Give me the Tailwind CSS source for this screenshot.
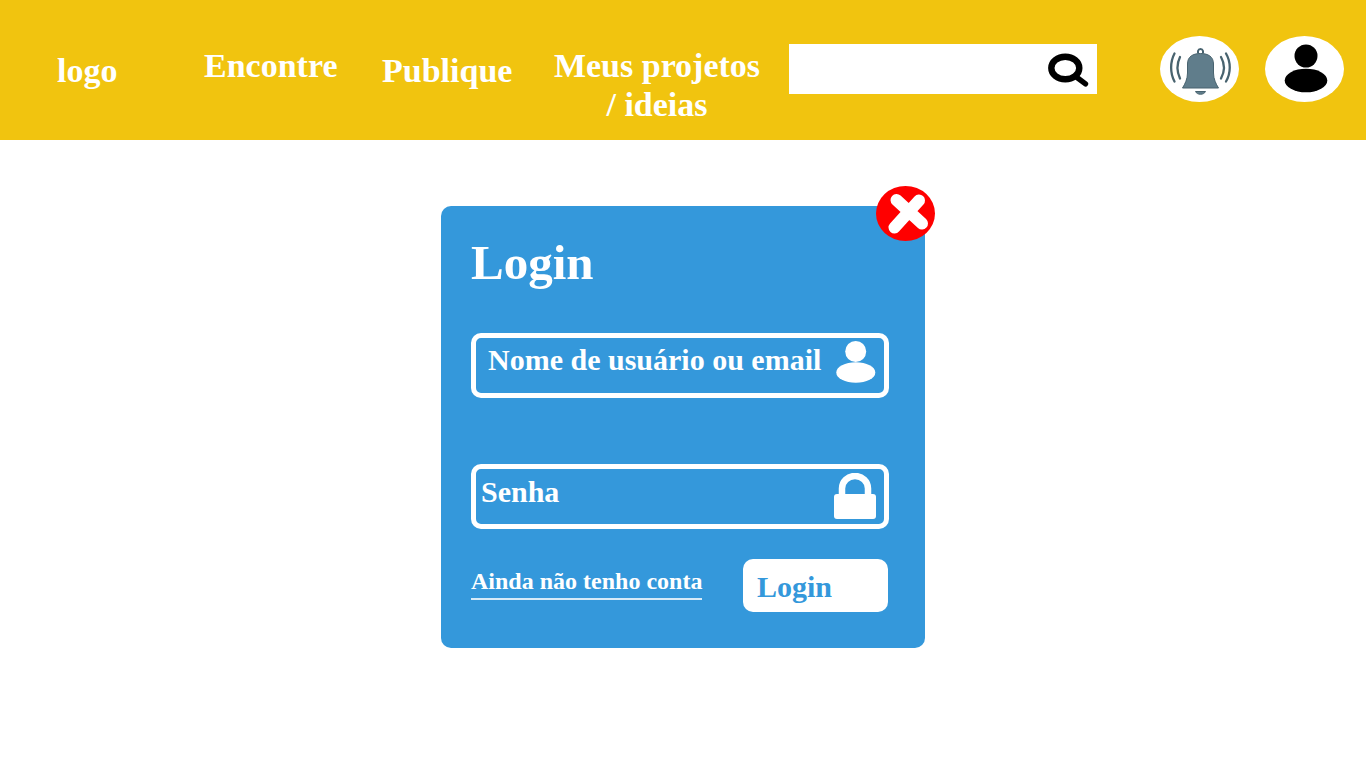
<!DOCTYPE html>
<html lang="pt-BR">
<head>
<meta charset="utf-8">
<meta name="viewport" content="width=device-width, initial-scale=1">
<title>Login</title>
<script src="https://cdn.jsdelivr.net/npm/@tailwindcss/browser@4"></script>
</head>
<body class="min-h-screen bg-white font-['Liberation_Serif',serif] font-bold">
  <header class="flex min-h-35 items-start bg-[#f1c40f] pr-[22px] pl-[57px] text-[34px] leading-[39px] text-white">
    <a href="#" class="mt-[51px] w-[147px] shrink-0">logo</a>
    <nav class="flex shrink-0 items-start">
      <a href="#" class="mt-[46px] w-[178px]">Encontre</a>
      <a href="#" class="mt-[51px] w-[169px]">Publique</a>
      <a href="#" class="mt-[46px] w-[212px] text-center">Meus projetos<br>/ ideias</a>
    </nav>
    <form role="search" class="mt-11 ml-[26px] flex h-[50px] min-w-0 flex-1 items-center bg-white">
      <input type="search" aria-label="Buscar" class="h-full min-w-0 flex-1 px-3 text-2xl text-black outline-none">
      <button type="button" aria-label="Pesquisar" class="mr-2 shrink-0">
        <svg class="block" width="42" height="36" viewBox="0 0 42 36" fill="none" stroke="#000">
          <ellipse cx="18.300" cy="17" rx="14" ry="11.300" stroke-width="6.400"/>
          <path d="M28 25 38.500 32.800" stroke-width="5.400" stroke-linecap="round"/>
        </svg>
      </button>
    </form>
    <div class="mt-9 ml-[63px] flex shrink-0 gap-[26px]">
      <button type="button" aria-label="Notificações">
        <svg class="block" width="79" height="66" viewBox="0 0 79 66">
          <ellipse cx="39.500" cy="33" rx="39.500" ry="33" fill="#fff"/>
          <g fill="#607d8b" stroke="#48636f" stroke-width="1">
            <path d="M27.500 28C27.500 20.500 33 17.500 40.500 17.500S53.500 20.500 53.500 28V37C53.500 43 56 48 58.500 52H22.500C25 48 27.500 43 27.500 37Z"/>
            <path d="M35.500 55.500H45.500C44 59.200 37 59.200 35.500 55.500Z"/>
          </g>
          <path d="M38 17.500V15A2.600 2.600 0 0 1 43 15V17.500" fill="none" stroke="#48636f" stroke-width="2"/>
          <g fill="none" stroke="#48636f" stroke-width="2.300" stroke-linecap="round">
            <path d="M14.500 17.500C10 26 10 37 14.500 45.500M20 21C16.600 28 16.600 35 20 42.500"/>
            <path d="M66 17.500C71 26 71 37 66 45.500M61 21C65 28 65 35 61 42.500"/>
          </g>
        </svg>
      </button>
      <button type="button" aria-label="Perfil">
        <svg class="block" width="79" height="66" viewBox="0 0 79 66">
          <ellipse cx="39.500" cy="33" rx="39.500" ry="33" fill="#fff"/>
          <circle cx="41" cy="20" r="11.500"/>
          <ellipse cx="41" cy="44.500" rx="21.300" ry="11.800"/>
        </svg>
      </button>
    </div>
  </header>

  <main class="px-4 pt-[66px] pb-8">
    <section class="relative mx-auto max-w-[484px] rounded-[10px] bg-[#3498db] pt-[30px] pr-9 pb-9 pl-[30px] text-white">
      <button type="button" aria-label="Fechar" class="absolute -top-5 -right-2.5">
        <svg class="block" width="59" height="55" viewBox="0 0 59 55">
          <ellipse cx="29.500" cy="27.500" rx="29.500" ry="27.500" fill="#f00"/>
          <path d="M20.500 14 46 37.500M43 14.500 18.500 41.500" stroke="#fff" stroke-width="12" stroke-linecap="round"/>
        </svg>
      </button>
      <h1 class="text-[49px] leading-[54px]">Login</h1>

      <form>
        <div class="mt-[43px] flex h-[65px] items-start rounded-[10px] border-[5px] border-white">
          <input type="text" aria-label="Nome de usuário ou email" placeholder="Nome de usuário ou email" class="h-[44px] min-w-0 flex-1 pl-3 text-[30px] leading-[36px] text-white outline-none placeholder:text-white placeholder:opacity-100">
          <svg class="mt-[3px] mr-2 shrink-0" width="40" height="42" viewBox="0 0 40 42" fill="#fff" aria-hidden="true">
            <circle cx="19.700" cy="10.500" r="10.500"/>
            <ellipse cx="19.800" cy="31.500" rx="19.500" ry="10.300"/>
          </svg>
        </div>
        <div class="mt-[66px] flex h-[65px] items-start rounded-[10px] border-[5px] border-white">
          <input type="password" aria-label="Senha" placeholder="Senha" class="h-[46px] min-w-0 flex-1 pl-[5px] text-[30px] leading-[36px] text-white outline-none placeholder:text-white placeholder:opacity-100">
          <svg class="mt-1 mr-2 shrink-0" width="42" height="46" viewBox="0 0 42 46" aria-hidden="true">
            <path d="M8 23V15.500A13 12.500 0 0 1 34 15.500V23" fill="none" stroke="#fff" stroke-width="6.500"/>
            <rect y="21" width="42" height="25" rx="3" fill="#fff"/>
          </svg>
        </div>
        <div class="mt-[30px] flex items-start justify-between">
          <a href="#" class="mt-2 border-b-2 border-white/80 pb-[3px] text-2xl leading-[28px]">Ainda não tenho conta</a>
          <button type="submit" class="mr-px h-[53px] w-[145px] rounded-[10px] bg-white pt-0.5 pl-3.5 text-left text-[30px] leading-[36px] text-[#3498db]">Login</button>
        </div>
      </form>
    </section>
  </main>
</body>
</html>
